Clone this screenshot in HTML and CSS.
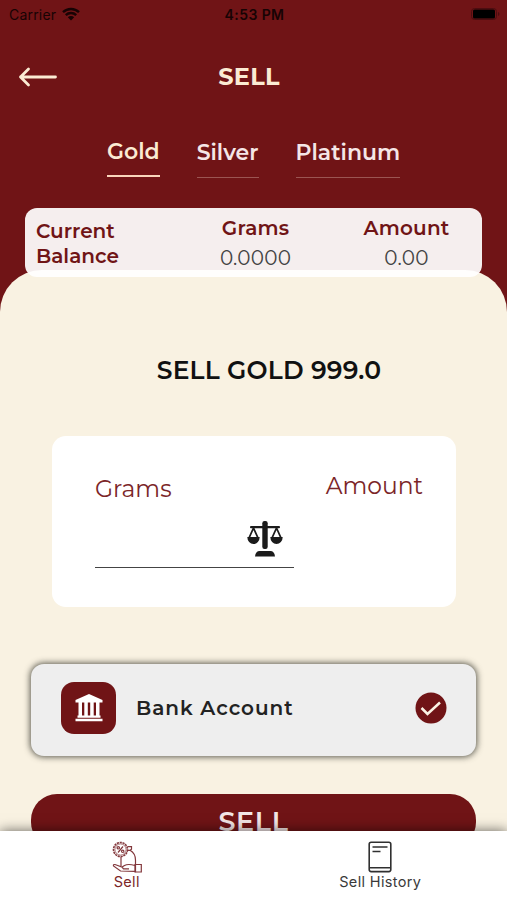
FILE: index.html
```html
<!DOCTYPE html>
<html lang="en">
<head>
  <meta charset="UTF-8">
  <title>Sell</title>
  <meta name="viewport" content="width=device-width, initial-scale=1.0">
  <link rel="stylesheet" href="styles.css">
</head>
<body>
  <div class="status">
    <div class="carrier">
      <span>Carrier</span>
      <svg width="18" height="14" viewBox="0 0 18 14">
        <path d="M1 5.2a11.5 11.5 0 0 1 16 0M3.8 8.1a7.4 7.4 0 0 1 10.4 0" fill="none" stroke="#170304" stroke-width="2.4"/>
        <path d="M5.8 10.3a4.6 4.6 0 0 1 6.4 0L9 13.6z" fill="#170304"/>
      </svg>
    </div>
    <span class="time">4:53 PM</span>
    <svg class="battery" width="29" height="12" viewBox="0 0 29 12">
      <rect x=".5" y=".5" width="25" height="11" rx="3" fill="none" stroke="#4c0d10"/>
      <rect x="2" y="1.5" width="22" height="9" rx="1.5"/>
      <path d="M27 4v4q1.5-.6 1.5-2T27 4z" fill="#4c0d10"/>
    </svg>
  </div>

  <header class="header">
    <a href="#" class="back" aria-label="Back">
      <svg width="40" height="20" viewBox="0 0 40 20">
        <path d="M37.5 10H2.5M10.5 2L2.5 10l8 8" fill="none" stroke="#fbebd3" stroke-width="2.8" stroke-linecap="round" stroke-linejoin="round"/>
      </svg>
    </a>
    <h1>SELL</h1>
  </header>

  <nav class="tabs">
    <a href="#" class="tab active">Gold</a>
    <a href="#" class="tab">Silver</a>
    <a href="#" class="tab">Platinum</a>
  </nav>

  <section class="balance">
    <div class="balance-title">Current<br>Balance</div>
    <div class="balance-col">
      <span class="balance-label">Grams</span>
      <span class="balance-value">0.0000</span>
    </div>
    <div class="balance-col">
      <span class="balance-label">Amount</span>
      <span class="balance-value">0.00</span>
    </div>
  </section>

  <main class="sheet">
    <h2>SELL GOLD 999.0</h2>

    <div class="entry">
      <div class="grams">
        <label>Grams</label>
        <div class="grams-field">
          <svg width="36" height="36" viewBox="0 0 36 36" fill="#1b1b1b">
            <rect x="15.3" y="0" width="5.4" height="28" rx="2.2"/>
            <rect x="3" y="5" width="30" height="2.2" rx="1"/>
            <path d="M6.5 7L2 17M6.5 7L11 17M29.5 7L25 17M29.5 7L34 17" fill="none" stroke="#1b1b1b" stroke-width="1.8"/>
            <path d="M.3 16h12.4a6.2 7 0 0 1-12.4 0zM23.3 16h12.4a6.2 7 0 0 1-12.4 0z"/>
            <path d="M8 35.5q.5-5 4-5.5h12q3.500.5 4 5.5z"/>
          </svg>
        </div>
      </div>
      <label>Amount</label>
    </div>

    <div class="bank">
      <div class="bank-icon">
        <svg width="28" height="28" viewBox="0 0 28 28" fill="#fff">
          <path d="M14 0l13.5 6v2.5H.5V6z"/>
          <path d="M3.5 8H7v14H3.500zM9.300 8h3.500v14H9.300zM15.200 8h3.500v14h-3.500zM21 8h3.500v14H21z"/>
          <path d="M2.500 21.500h23v2.200h-23zM.5 24.800h27v2.500H.5z"/>
        </svg>
      </div>
      <span class="bank-name">Bank Account</span>
      <svg width="32" height="32" viewBox="0 0 32 32">
        <circle cx="16" cy="16" r="15.5" fill="#701416"/>
        <path d="M6.5 16l6 6L25 10.5" fill="none" stroke="#fbf3e4" stroke-width="2.5"/>
      </svg>
    </div>

    <button class="sell-button">SELL</button>
  </main>

  <footer class="bottom-bar">
    <a href="#" class="bottom-item selected">
      <svg width="30" height="32" viewBox="0 0 30 32" fill="none" stroke="#83383c" stroke-width="1.2">
        <circle cx="8.5" cy="8.5" r="7" stroke-width="1.6" stroke-dasharray="2.2 .7"/>
        <circle cx="8.5" cy="8.5" r="5.6" stroke-width=".7"/>
        <path d="M6 11.5l5-6"/>
        <circle cx="6.3" cy="6.8" r="1.2"/>
        <circle cx="10.7" cy="10.3" r="1.2"/>
        <path d="M15.5 5.7h4v2.6l-1.500 1h-2M18 9.300q5.500 3 5.500 10v12M9 16v9"/>
        <path d="M23 24.500q-7-2-10.500 0l-2.500 1.500-7-2.500q-2-.2-1.500 1.500l7 5 14.500.300M10 26l1.500 1.800h5.500"/>
        <path d="M23 23.500h6.300v7.500H23z"/>
      </svg>
      <span>Sell</span>
    </a>
    <a href="#" class="bottom-item">
      <svg width="24" height="32" viewBox="0 0 24 32" fill="none" stroke="#303030" stroke-width="1.6">
        <rect x="1.2" y="1.2" width="21.6" height="29.4" rx="2"/>
        <path d="M1.2 26.8h21.600M4.500 6h15M4.500 10.500h8"/>
      </svg>
      <span>Sell History</span>
    </a>
  </footer>
</body>
</html>
```

FILE: styles.css
```css
* {
  box-sizing: border-box;
}
html, body {
  height: 100%;
}
body {
  background: #701416;
  display: flex;
  flex-direction: column;
  font-family: Montserrat, Inter, "Liberation Sans", sans-serif;
  margin: 0;
  overflow: hidden;
}
a {
  color: inherit;
  text-decoration: none;
}
h1, h2 {
  margin: 0;
}
svg {
  display: block;
  flex: none;
}

/*status bar*/
.status {
  align-items: center;
  color: #170304;
  display: grid;
  font-family: Inter, "Liberation Sans", sans-serif;
  font-size: 14px;
  grid-template-columns: 1fr auto 1fr;
  height: 28px;
  padding: 0 7px 0 9px;
}
.carrier {
  align-items: center;
  display: flex;
  gap: 6px;
  letter-spacing: .2px;
}
.time {
  font-weight: 600;
  letter-spacing: .4px;
}
.battery {
  justify-self: end;
}

/*title row*/
.header {
  align-items: center;
  color: #fbebd3;
  display: grid;
  grid-template-columns: 1fr auto 1fr;
  height: 98px;
  padding: 0 27px 1px 18px;
}
h1 {
  font-size: 24px;
  font-weight: 700;
  letter-spacing: .3px;
}

.tabs {
  align-items: flex-start;
  color: #f5e6e6;
  display: flex;
  gap: 37px;
  height: 82px;
  padding: 10px 0 0 107px;
}
.tab {
  border-bottom: 1px solid #9b5552;
  font-size: 22px;
  font-weight: 600;
  height: 42px;
  line-height: 33px;
}
.tab.active {
  border-bottom: 2px solid #f9d5bb;
  color: #fbebd3;
  height: 41px;
  line-height: 32px;
}

/*balance card, hangs over the top of the sheet*/
.balance {
  background: rgba(255, 255, 255, .93);
  border-radius: 12px;
  color: #701416;
  display: flex;
  flex: none;
  height: 69px;
  margin: 0 25px -7px;
  padding: 6px 0 0 11px;
  position: relative;
  z-index: 1;
}
.balance-title {
  font-size: 20px;
  font-weight: 600;
  line-height: 25px;
  padding-top: 5px;
  width: 144px;
}
.balance-col {
  align-items: center;
  display: flex;
  flex-direction: column;
  width: 151px;
}
.balance-label {
  font-size: 20px;
  font-weight: 600;
  letter-spacing: .2px;
  line-height: 28px;
}
.balance-value {
  color: #444;
  font-size: 20px;
  font-weight: 400;
  letter-spacing: .2px;
  line-height: 33px;
}

.sheet {
  background: #f9f2e2;
  border-radius: 42px 42px 0 0;
  flex: 1;
  min-height: 0;
  overflow: hidden;
  padding-top: 83px;
}
h2 {
  color: #111;
  font-size: 25px;
  font-weight: 600;
  letter-spacing: .2px;
  line-height: 34px;
  padding-left: 31px;
  text-align: center;
}

/*amount entry*/
.entry {
  background: #fff;
  border-radius: 14px;
  color: #7b2528;
  display: flex;
  font-size: 23.4px;
  font-weight: 400;
  height: 171px;
  justify-content: space-between;
  line-height: 32px;
  margin: 49px 51px 0 52px;
  padding: 34px 33px 0 43px;
}
.grams {
  padding-top: 3px;
  width: 199px;
}
.grams-field {
  border-bottom: 1px solid #444;
  display: flex;
  height: 63px;
  justify-content: flex-end;
  padding: 16px 11px 0 0;
}

.bank {
  align-items: center;
  background: #eee;
  border-radius: 13px;
  box-shadow: 0 0 6px 1px rgba(50, 50, 40, .8);
  display: flex;
  height: 92px;
  margin: 57px 31px 0;
  padding: 0 29px 4px 30px;
}
.bank-icon {
  align-items: center;
  background: #701416;
  border-radius: 13px;
  display: flex;
  height: 52px;
  justify-content: center;
  width: 55px;
}
.bank-name {
  color: #222;
  flex: 1;
  font-size: 20px;
  font-weight: 600;
  letter-spacing: 1px;
  padding-left: 20px;
}
.sell-button {
  background: #701416;
  border: 0;
  border-radius: 26px;
  color: #f3e6e6;
  display: block;
  font-family: inherit;
  font-size: 27px;
  font-weight: 600;
  height: 54px;
  letter-spacing: .7px;
  margin: 38px 31px 0;
  padding: 0;
  width: 445px;
}

.bottom-bar {
  background: #fff;
  box-shadow: 0 0 12px rgba(0, 0, 0, .6);
  color: #3a3a3a;
  display: flex;
  flex: none;
  font-family: Inter, "Liberation Sans", sans-serif;
  height: 69px;
  position: relative;
  z-index: 1;
}
.bottom-item {
  align-items: center;
  display: flex;
  flex: 1;
  flex-direction: column;
  font-size: 14.5px;
  letter-spacing: .35px;
  line-height: 18px;
  padding-top: 9.5px;
}
.bottom-item.selected {
  color: #7b2528;
}
```
